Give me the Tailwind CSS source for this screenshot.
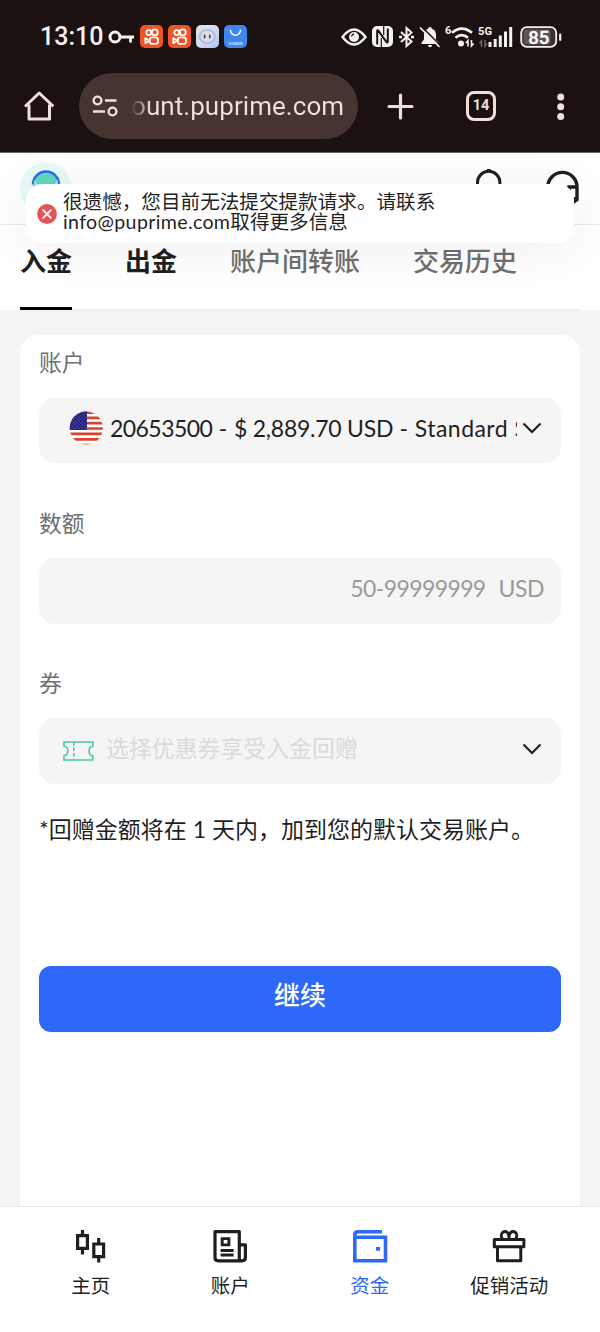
<!DOCTYPE html>
<html lang="zh-CN">
<head>
<meta charset="utf-8">
<meta name="viewport" content="width=device-width, initial-scale=1">
<title>入金</title>
<script src="https://cdn.jsdelivr.net/npm/@tailwindcss/browser@4"></script>
</head>
<body class="bg-[#f4f4f4]">
<div class="relative flex h-[1332px] w-[600px] flex-col overflow-hidden font-['Lato','Noto_Sans_CJK_SC',sans-serif] text-[#1f1f1f]">

  <!-- Status bar and browser toolbar -->
  <header class="flex h-[153px] flex-none flex-col border-b border-[#6f6866] bg-[#1a1110]">
    <div class="flex h-[73px] items-center pl-[40px] pr-[38px] font-['Roboto','Noto_Sans_CJK_SC',sans-serif] text-[#f4f2f1]">
      <span class="w-[68px] text-[25px] font-medium leading-none tracking-[0px]">13:10</span>
      <svg class="h-[16px] w-[26px]" viewBox="0 0 26 16" fill="none" stroke="#f4f2f1" stroke-width="3"><circle cx="7" cy="8" r="5"/><path d="M12 8H26M22.500 8V13.500" stroke-width="2.800"/></svg>
      <div class="ml-[6px] flex gap-[5px]">
        <svg class="size-[23px]" viewBox="0 0 23 23"><rect width="23" height="23" rx="5" fill="#ef5428"/><g fill="none" stroke="#fff" stroke-width="1.8"><circle cx="8.800" cy="7.6" r="2.5"/><circle cx="14.800" cy="7.3" r="3"/><rect x="9.8" y="12.3" width="8.2" height="6.6" rx="2.4"/><path d="M9.5 15.6L5.3 13.3V18.2Z" stroke-linejoin="round"/></g></svg>
        <svg class="size-[23px]" viewBox="0 0 23 23"><rect width="23" height="23" rx="5" fill="#ef5428"/><g fill="none" stroke="#fff" stroke-width="1.8"><circle cx="8.800" cy="7.6" r="2.5"/><circle cx="14.800" cy="7.3" r="3"/><rect x="9.8" y="12.3" width="8.2" height="6.6" rx="2.4"/><path d="M9.5 15.6L5.3 13.3V18.2Z" stroke-linejoin="round"/></g></svg>
        <svg class="size-[23px]" viewBox="0 0 23 23"><defs><linearGradient id="a" x2="1" y2="1"><stop stop-color="#e6e3dc"/><stop offset=".5" stop-color="#d3dcf0"/><stop offset="1" stop-color="#b4c5f3"/></linearGradient></defs><rect width="23" height="23" rx="5" fill="url(#a)"/><ellipse cx="11.3" cy="11.5" rx="8.5" ry="7.5" fill="#aebbe2"/><ellipse cx="11.3" cy="11.5" rx="6.6" ry="5.8" fill="#dcdcea"/><path d="M8.6 10.500v2M13.8 10.500v2" stroke="#4a4750" stroke-width="1.8" stroke-linecap="round"/></svg>
        <svg class="size-[23px]" viewBox="0 0 23 23"><rect width="23" height="23" rx="5" fill="#3f86f0"/><path d="M6.5 5.2a5 5 0 0 0 10 0" fill="none" stroke="#fff" stroke-width="1.6" stroke-linecap="round"/><text x="11.5" y="19.8" font-size="4" font-weight="700" text-anchor="middle" fill="#cfe1ff" textLength="14">HONOR</text></svg>
      </div>
      <div class="ml-auto flex items-center">
        <svg class="h-[18px] w-[26px]" viewBox="0 0 26 18"><path d="M1.5 9Q13-6 24.5 9Q13 24 1.5 9Z" fill="none" stroke="#f4f2f1" stroke-width="2.4"/><circle cx="13" cy="9" r="5" fill="#f4f2f1"/><path d="M10.5 8.5a3 3 0 0 1 2.5-2.5" stroke="#1a1110" stroke-width="1.3" fill="none"/></svg>
        <svg class="ml-[5px] h-[21px] w-[21px]" viewBox="0 0 21 21"><rect width="21" height="21" rx="5" fill="#f4f2f1"/><path d="M5.200 18.500V5Q5.200 3.500 6.500 4.800L14.500 16Q15.800 17.300 15.800 15.500V2.500" fill="none" stroke="#1a1110" stroke-width="2"/><path d="M9.300 12V21M11.700 0V9" stroke="#1a1110" stroke-width="1.200"/></svg>
        <svg class="ml-[6px] h-[22px] w-[15px]" viewBox="0 0 15 22" fill="none" stroke="#f4f2f1" stroke-width="2"><path d="M2 6L12.500 15.500L7.500 20V2L12.500 6.500L2 16"/><path d="M0 11h3M12 11h3" stroke-width="2.4"/></svg>
        <svg class="ml-[5px] h-[22px] w-[22px]" viewBox="0 0 22 22"><path d="M11 1c1.200 0 1.800.8 1.800 1.800C16 3.800 17 6.500 17 9v4.500l2.500 3V18h-17v-1.500l2.500-3V9c0-2.500 1-5.200 4.200-6.200C9.200 1.800 9.800 1 11 1zM9 19h4c0 3-4 3-4 0z" fill="#f4f2f1"/><path d="M3 1L21 19" stroke="#1a1110" stroke-width="1.600"/><path d="M1 1.500L20.500 21" stroke="#f4f2f1" stroke-width="1.700"/></svg>
        <svg class="ml-[4px] h-[23px] w-[30px] overflow-visible" viewBox="0 0 30 23"><text x="0" y="9" font-size="11" font-weight="700" fill="#f4f2f1">6</text><g fill="none" stroke="#f4f2f1" stroke-width="2.600"><path d="M7 7.800Q16.500 -.5 27 7.800M10.500 12.800Q16.500 7.500 23 12.800"/></g><circle cx="16" cy="18.500" r="3" fill="#f4f2f1"/><path d="M23 21.500v-6l-2.200 2.500M26.500 15v6l2.200-2.500" stroke="#f4f2f1" stroke-width="1.600" fill="none"/></svg>
        <svg class="ml-[3px] h-[23px] w-[35px]" viewBox="0 0 35 23"><text x="0" y="10" font-size="11.500" font-weight="700" textLength="14" lengthAdjust="spacingAndGlyphs" fill="#f4f2f1">5G</text><path d="M3.500 22v-6l-2 2.500M7 15v6l2-2.500" stroke="#6d6665" stroke-width="1.500" fill="none"/><path d="M12 22v-5M17.200 22v-8M22.300 22V10.500M27.500 22V6.500M32.700 22V2" stroke="#f4f2f1" stroke-width="3"/></svg>
        <svg class="ml-[7px] h-[22px] w-[42px]" viewBox="0 0 42 22"><rect x="1.200" y="1.200" width="35" height="19.600" rx="5.500" fill="#3a3231" stroke="#f4f2f1" stroke-width="1.800"/><rect x="3.500" y="3.500" width="27" height="15" rx="3" fill="#5d5655"/><path d="M40.200 8.500v5.500" stroke="#f4f2f1" stroke-width="2.200" stroke-linecap="round"/><text x="18.700" y="17.600" font-size="18.500" font-weight="500" text-anchor="middle" fill="#fff" stroke="#fff" stroke-width=".3">85</text></svg>
      </div>
    </div>

    <div class="flex h-[66px] items-center text-[#f1dfda]">
      <svg class="ml-[24px] h-[30px] w-[30px]" viewBox="0 0 30 30" fill="none" stroke="#f1dfda" stroke-width="3" stroke-linejoin="round"><path d="M5 13.500V28h20.500V13.500M1 15.500L15.200 2L29.400 15.500"/></svg>
      <div class="ml-[25px] flex h-[66px] w-[279px] items-center rounded-full bg-[#463430] pl-[13px]">
        <svg class="h-[22px] w-[26px]" viewBox="0 0 26 22" fill="none" stroke="#f1dfda" stroke-width="2.400"><circle cx="5.500" cy="5.500" r="3.900"/><path d="M13 5.500h11.500M1 16.500h12"/><circle cx="20.500" cy="16.500" r="3.900"/></svg>
        <span class="ml-[13px] bg-linear-to-r from-[#463430] to-[#f1dfda] to-[9%] bg-clip-text font-['Roboto',sans-serif] text-[26px] leading-[36px] tracking-[0.06px] text-transparent">ount.puprime.com</span>
      </div>
      <svg class="ml-[29px] h-[27px] w-[27px]" viewBox="0 0 27 27" fill="none" stroke="#f1dfda" stroke-width="3.200" stroke-linecap="round"><path d="M13.500 2v23M2 13.500h23"/></svg>
      <div class="ml-[52px] flex h-[30px] w-[30px] items-center justify-center rounded-[8px] border-[3px] border-[#f1dfda] pt-[1px] font-['Roboto',sans-serif] text-[14.5px] font-bold leading-none">14</div>
      <svg class="ml-[60px] h-[27px] w-[9px]" viewBox="0 0 9 27" fill="#f1dfda"><circle cx="4.700" cy="4" r="3.500"/><circle cx="4.700" cy="13.700" r="3.500"/><circle cx="4.700" cy="23.400" r="3.500"/></svg>
    </div>
  </header>

  <!-- Site header -->
  <div class="flex h-[72px] flex-none items-start border-b border-[#e9e9e9] bg-white pl-[20px] pt-[9px]">
    <svg class="size-[52px]" viewBox="0 0 52 52"><circle cx="26" cy="26" r="26" fill="#e9f9f8"/><circle cx="26" cy="23" r="13" fill="#5fd9bd"/><path d="M13 22.500a13 13 0 0 1 26 0" fill="none" stroke="#2b67f6" stroke-width="2.400"/><path d="M14.500 17.500a12 12 0 0 1 3 5.500h-4zM37.500 17.500a12 12 0 0 0-3 5.500h4z" fill="#93ead9"/></svg>
    <svg class="ml-[403px] mt-[5px] h-[34px] w-[28px]" viewBox="0 0 28 34" fill="none" stroke="#1f1f1f" stroke-width="3"><path d="M2.500 28V15.500a11.200 11.200 0 0 1 22.400 0V28z"/><path d="M13.700 2v3" stroke-width="3.600"/></svg>
    <svg class="ml-[43px] mt-[7px] h-[36px] w-[34px]" viewBox="0 0 34 36" fill="none" stroke="#1f1f1f" stroke-width="3.400"><path d="M1.800 18a14.600 14.600 0 0 1 29.200 0V30.500L26 34"/><path d="M32 18H23V30H32"/></svg>
  </div>

  <!-- Tabs -->
  <nav class="flex h-[85px] flex-none bg-white px-[20px] text-[26px] leading-[36px]">
    <div class="flex flex-1 gap-[53px] border-b border-[#e9e9e9] pt-[18px] font-medium text-[#6f6f6f]">
      <div class="flex h-[67px] flex-col justify-between border-b-[3px] border-black font-bold text-[#1f1f1f]">入金</div>
      <div class="font-bold text-[#1f1f1f]">出金</div>
      <div>账户间转账</div>
      <div>交易历史</div>
    </div>
  </nav>

  <!-- Deposit form -->
  <main class="mx-[20px] mt-[25px] flex-1 rounded-t-[18px] bg-white px-[19px] pt-[11px] text-[23px] leading-[32px]">
    <div class="text-[22.800px] text-[#6f6f6f]">账户</div>
    <div class="mt-[20px] flex h-[65px] w-[522px] items-center rounded-[16px] bg-[#f5f5f5] pl-[30px] pr-[19px]">
      <svg class="-mt-[6px] size-[34px] flex-none" viewBox="0 0 34 34"><defs><clipPath id="f"><circle cx="17.300" cy="17" r="16.600"/></clipPath><pattern id="s" width="3.600" height="3.600" patternUnits="userSpaceOnUse"><circle cx="1" cy="1" r=".55" fill="#aaa8d8"/><circle cx="2.800" cy="2.800" r=".55" fill="#aaa8d8"/></pattern></defs><g clip-path="url(#f)"><path fill="#fff" d="M0 0h34v34H0z"/><path d="M0 1.700h34M0 6.900h34M0 12.200h34M0 17.500h34M0 22.900h34M0 28.300h34M0 34h34" stroke="#d8432f" stroke-width="2.700"/><path fill="#1c1a7a" d="M0 0h18v19H0z"/><path fill="url(#s)" d="M0 0h18v19H0z"/></g></svg>
      <div class="-mt-[6px] ml-[7px] w-[407px] overflow-hidden whitespace-nowrap tracking-[0.45px]"><span class="tracking-[-0.55px]">20653500</span> - <span class="tracking-[-0.25px]">$ 2,889.70 USD</span> - Standard STP</div>
      <svg class="-mt-[5px] ml-[5px] h-[12px] w-[20px] flex-none" viewBox="0 0 20 12" fill="none" stroke="#1f1f1f" stroke-width="2.200"><path d="M1.500 1.500L10 10L18.500 1.500"/></svg>
    </div>

    <div class="mt-[44px] text-[22.800px] text-[#6f6f6f]">数额</div>
    <div class="mt-[19px] flex h-[66px] w-[522px] items-center justify-end gap-[13px] rounded-[16px] bg-[#f5f5f5] pr-[17px] text-[#9a9a9a]">
      <span class="-mt-[6px] tracking-[-0.6px]">50-99999999</span><span class="-mt-[6px] tracking-[-0.5px]">USD</span>
    </div>

    <div class="mt-[43px] text-[22.800px] text-[#6f6f6f]">券</div>
    <div class="mt-[19px] flex h-[66px] w-[522px] items-center rounded-[16px] bg-[#f5f5f5] pl-[24px] pr-[19px]">
      <svg class="h-[20px] w-[31px]" viewBox="0 0 31 20" fill="none" stroke="#44cb9f" stroke-width="1.600"><path d="M1 1H29.800V5.200Q26 6 26 10T29.800 14.800V19H1V14.800Q4.800 14 4.800 10T1 5.200Z"/><path d="M10.800 1v18" stroke-dasharray="3.500 2"/></svg>
      <span class="-mt-[7px] ml-[12px] text-[22.900px] text-[#dadada]">选择优惠券享受入金回赠</span>
      <svg class="-mt-[5px] ml-auto h-[12px] w-[20px]" viewBox="0 0 20 12" fill="none" stroke="#1f1f1f" stroke-width="2.200"><path d="M1.500 1.500L10 10L18.500 1.500"/></svg>
    </div>

    <p class="mt-[29px] whitespace-nowrap">*回赠金额将在 1 天内，加到您的默认交易账户。</p>
    <button class="mt-[121px] block h-[66px] w-[522px] rounded-[12px] bg-[#2d68f8] pb-[8px] text-[26px] font-medium text-white">继续</button>
  </main>

  <!-- Bottom navigation -->
  <nav class="flex h-[126px] flex-none border-t border-[#e8e8e8] bg-white px-[21px] pt-[22px] text-[19.500px] leading-[28px]">
    <div class="flex w-[139.500px] flex-col items-center gap-[9px]">
      <svg class="size-[34px]" viewBox="0 0 34 34" fill="none" stroke="#1f1f1f" stroke-width="3.200"><path d="M3.600 6.600h9.800v12.800H3.600zM8.500 1v5.600M8.500 19.400v6M19.800 15h9.800v12.600h-9.800zM24.700 9v6M24.700 27.600v6"/></svg>
      <span>主页</span>
    </div>
    <div class="flex w-[139.500px] flex-col items-center gap-[9px]">
      <svg class="size-[34px]" viewBox="0 0 34 34" fill="none" stroke="#1f1f1f" stroke-width="3.200"><path d="M2 2.600H26.300V31.800H5.500Q2 31.800 2 28.500ZM26.300 15.800H32.400V28.500Q32.400 31.800 29 31.800H26.300" stroke-linejoin="round"/><path d="M9.200 9.600h6.700v6.300H9.200zM7.600 21.500h13M7.600 26h13" stroke-width="2.900"/></svg>
      <span>账户</span>
    </div>
    <div class="flex w-[139.500px] flex-col items-center gap-[9px] text-[#2d68f8]">
      <svg class="h-[34px] w-[36px]" viewBox="0 0 36 34" fill="none" stroke="#2d68f8" stroke-width="3.600"><path d="M2.800 8.300H33.500V31.800H2.800V6Q2.800 2.800 6 2.800H30"/><path d="M24 18h4v3.700h-4z" fill="#2d68f8" stroke="none"/></svg>
      <span>资金</span>
    </div>
    <div class="flex w-[139.500px] flex-col items-center gap-[9px]">
      <svg class="size-[34px]" viewBox="0 0 34 34" fill="none" stroke="#1f1f1f" stroke-width="3" stroke-linejoin="round"><path d="M2.300 10.400h29.600v7.300H2.300zM5.500 17.700h23.300v14H5.500z"/><path d="M10.500 10C8 7 9.700 2.500 13 2.500S17 7 17 10C17 7 17.500 2.500 21 2.500S26 7 23.500 10" stroke-width="2.800"/></svg>
      <span>促销活动</span>
    </div>
  </nav>

  <!-- Error toast over the page -->
  <div class="absolute left-[26px] top-[184px] flex h-[59px] w-[548px] items-center rounded-[16px] bg-white pl-[11px] shadow-[0_4px_50px_rgba(0,0,0,0.07)]">
    <svg class="size-[20px]" viewBox="0 0 20 20"><circle cx="10" cy="10" r="9.900" fill="#e45656"/><path d="M6.200 6.200l7.600 7.600M13.800 6.200l-7.600 7.600" stroke="#fff" stroke-width="1.800" stroke-linecap="round"/></svg>
    <div class="-mt-[4px] ml-[6px] whitespace-nowrap text-[19.600px] leading-[20px]">
      <p>很遗憾，您目前无法提交提款请求。请联系</p>
      <p><span class="tracking-[0.35px]">info@puprime.com</span>取得更多信息</p>
    </div>
  </div>
</div>
</body>
</html>
